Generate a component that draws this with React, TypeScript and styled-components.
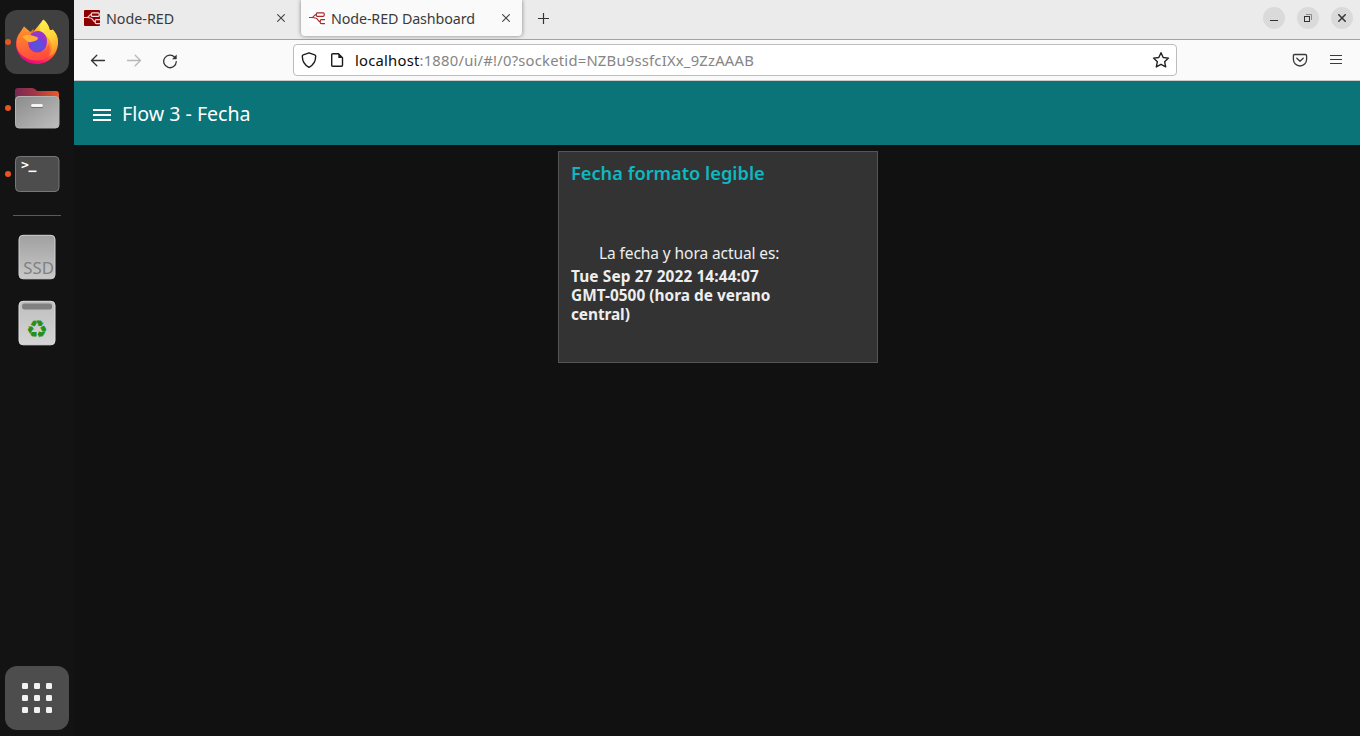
import React from "react";
import styled, { createGlobalStyle } from "styled-components";

const GlobalStyle = createGlobalStyle`
  *, *::before, *::after { box-sizing: border-box; }
  body { margin: 0; background: #111111; }
  svg { display: block; flex: none; }
`;

const Desktop = styled.div`
  display: flex;
  width: 100%;
  height: 100vh;
  overflow: hidden;
  font-family: "Noto Sans", sans-serif;
`;

const Dock = styled.nav`
  display: flex;
  flex-direction: column;
  align-items: center;
  gap: 2px;
  flex: none;
  width: 74px;
  padding: 10px 5px 6px;
  background: #131313;
`;

const DockItem = styled.div<{ $fill?: string; $last?: boolean }>`
  position: relative;
  display: flex;
  align-items: center;
  justify-content: center;
  flex: none;
  width: 64px;
  height: 64px;
  margin-top: ${(p) => (p.$last ? "auto" : "0")};
  border-radius: 12px;
  background: ${(p) => p.$fill ?? "transparent"};
`;

const RunningDot = styled.span`
  position: absolute;
  left: 0;
  top: 29px;
  width: 6px;
  height: 6px;
  border-radius: 50%;
  background: #e95420;
`;

const DockSeparator = styled.hr`
  flex: none;
  width: 48px;
  height: 1px;
  margin: 7px 0;
  border: 0;
  background: #5a5a5a;
`;

const Browser = styled.main`
  display: flex;
  flex-direction: column;
  flex: 1;
  min-width: 0;
`;

const TabStrip = styled.div`
  display: flex;
  flex: none;
  height: 40px;
  padding-right: 7px;
  background: #ebebeb;
  border-bottom: 1px solid #a3a3a3;
`;

const Tab = styled.div<{ $active?: boolean }>`
  display: flex;
  align-items: center;
  flex: none;
  width: ${(p) => (p.$active ? "221px" : "227px")};
  height: 36px;
  padding: ${(p) => (p.$active ? "0 12px 0 8px" : "0 16px 0 10px")};
  border-radius: 0 0 4px 4px;
  background: ${(p) => (p.$active ? "#fafafa" : "transparent")};
  box-shadow: ${(p) => (p.$active ? "0 0 4px rgba(0, 0, 0, 0.45)" : "none")};
  color: #3a3a3a;
`;

const TabTitle = styled.span<{ $spacing: number }>`
  flex: 1;
  margin-left: 6px;
  padding-top: 2px;
  font-size: 14.3px;
  line-height: 20px;
  letter-spacing: ${(p) => p.$spacing}px;
  white-space: nowrap;
`;

const NewTab = styled.div`
  display: flex;
  align-items: center;
  height: 37px;
  margin-left: 16px;
`;

const WindowControls = styled.div`
  display: flex;
  align-items: center;
  gap: 12px;
  height: 36px;
  margin-left: auto;
`;

const WindowButton = styled.div`
  display: flex;
  align-items: center;
  justify-content: center;
  width: 22px;
  height: 22px;
  border-radius: 50%;
  background: #dadada;
`;

const Toolbar = styled.div`
  display: flex;
  align-items: center;
  flex: none;
  height: 41px;
  padding: 0 16px;
  background: #fafafa;
  border-bottom: 1px solid #cccccc;
`;

const NavButtons = styled.div`
  display: flex;
  gap: 20px;
  width: 203px;
  padding-top: 1px;
`;

const AddressBar = styled.div`
  display: flex;
  align-items: center;
  width: 884px;
  height: 32px;
  padding: 0 6px 0 7px;
  background: #ffffff;
  border: 1px solid #bdbdbd;
  border-radius: 4px;
`;

const Url = styled.span`
  flex: 1;
  margin-left: 10px;
  font-size: 14.8px;
  line-height: 20px;
  letter-spacing: 0.22px;
  color: #858585;
  white-space: nowrap;
`;

const Host = styled.span`
  color: #0c0c0d;
`;

const PageIcon = styled.span`
  margin-left: 12px;
`;

const ToolbarActions = styled.div`
  display: flex;
  gap: 20px;
  margin-left: auto;
`;

const PageHeader = styled.header`
  display: flex;
  align-items: center;
  flex: none;
  height: 64px;
  padding: 0 19px;
  background: #0a7479;
`;

const PageTitle = styled.h1`
  margin: 0 0 0 11px;
  padding-top: 2px;
  font-size: 19.6px;
  font-weight: 400;
  line-height: 28px;
  letter-spacing: 0;
  color: #ffffff;
`;

const PageBody = styled.section`
  display: flex;
  flex: 1;
  align-items: flex-start;
  justify-content: center;
  padding: 6px 0 0 2px;
  background: #111111;
`;

const Card = styled.article`
  width: 320px;
  height: 212px;
  padding: 7px 12px;
  background: #333333;
  border: 1px solid #555555;
  color: #eeeeee;
`;

const CardTitle = styled.h2`
  margin: 0 0 57px;
  font-size: 18.2px;
  font-weight: 600;
  line-height: 28px;
  letter-spacing: 0.02px;
  color: #0eb8c0;
`;

const Label = styled.p`
  margin: 0 0 4px 28px;
  font-size: 15.5px;
  line-height: 19px;
  letter-spacing: -0.09px;
  white-space: nowrap;
`;

const Value = styled.p`
  margin: 0;
  font-size: 15.4px;
  font-weight: 700;
  line-height: 19px;
`;

const ValueLine = styled.span<{ $spacing: number }>`
  display: block;
  letter-spacing: ${(p) => p.$spacing}px;
  white-space: nowrap;
`;

const FirefoxIcon = () => (
  <svg width="48" height="48" viewBox="0 0 48 48">
    <defs>
      <linearGradient id="ffBody" x1="0.8" y1="0.05" x2="0.3" y2="1">
        <stop offset="0" stopColor="#fff44f" />
        <stop offset="0.3" stopColor="#ffb52e" />
        <stop offset="0.6" stopColor="#ff5a36" />
        <stop offset="0.85" stopColor="#f5156c" />
        <stop offset="1" stopColor="#e00a84" />
      </linearGradient>
      <linearGradient id="ffFlame" x1="0.4" y1="0" x2="0.7" y2="1">
        <stop offset="0" stopColor="#fff04a" />
        <stop offset="0.5" stopColor="#ffd33a" />
        <stop offset="1" stopColor="#ff8a25" />
      </linearGradient>
      <radialGradient id="ffGlobe" cx="0.5" cy="0.65" r="0.65">
        <stop offset="0" stopColor="#4a5be0" />
        <stop offset="0.55" stopColor="#7242dc" />
        <stop offset="1" stopColor="#a22bc4" />
      </radialGradient>
      <linearGradient id="ffHead" x1="0" y1="0" x2="0.6" y2="1">
        <stop offset="0" stopColor="#ff9a24" />
        <stop offset="1" stopColor="#ff5038" />
      </linearGradient>
    </defs>
    <path d="M30 2c4 4 5.500 7 6.500 10l3.500 0c4 4 5.200 8 5 13c-.3 12-9.500 21-21 21S3 37 3 26c0-5 1.500-8.500 4-11.500l4-6l8 7z" fill="url(#ffBody)" />
    <path d="M30.500 1.500c3 2.500 5.500 6 6.300 10.500c1 .8 1.700 2 2 3l.5-4c3.500 4 5.300 8 5.300 13.500c0 7-4 12-9 14c4-5 4-12 1-17c-2-3-6-4.500-9-7.500c-2-3-.5-8.500 2.900-12.500z" fill="url(#ffFlame)" />
    <path d="M7.200 15L11.500 8.500l1.500 5.500c1.500-.5 3-.4 4.500-.2l3-3v5.700l2.500 1.700c2 .8 3 1.300 2.300 2.800c-1.300 2-4.500 2.500-6.300 3.500c-3 1.500-3 1-3 3.500c.3 4 3.500 6.700 8 6.700c6.500 0 10.500-4 11.300-9c3 6 .5 13-5.300 16C18 45 5 38 3.500 28c-.5-5 1.200-9.500 3.700-13z" fill="url(#ffHead)" opacity="0.85" />
    <circle cx="24.500" cy="25" r="9.300" fill="url(#ffGlobe)" />
    <path d="M17 17.500c2-4 8-5.500 12-3.500c4 2.500 6 7 4.500 11c-2-3-5-5-8-5c-3-.6-6-2-8.500-2.500z" fill="#9537cb" />
    <path d="M9 19c4-3 9-2 13.500-.5c2 .7 3 1.300 2.200 2.700c-2 2-5 2.200-8 3c-3-.3-4-3-7.700-5.200z" fill="#ffae32" />
  </svg>
);

const FilesIcon = () => (
  <svg width="48" height="48" viewBox="0 0 48 48">
    <defs>
      <linearGradient id="folderBack" x1="0" y1="0" x2="1" y2="0">
        <stop offset="0" stopColor="#772953" />
        <stop offset="0.45" stopColor="#a33545" />
        <stop offset="1" stopColor="#ee5a24" />
      </linearGradient>
      <linearGradient id="folderFront" x1="0" y1="0" x2="1" y2="1">
        <stop offset="0" stopColor="#8b8b8b" />
        <stop offset="1" stopColor="#bebebe" />
      </linearGradient>
    </defs>
    <path d="M2 20V7q0-3 3-3h14q2 0 3.500 1.500L24 7h19q3 0 3 3v10z" fill="url(#folderBack)" />
    <rect x="2.500" y="12.500" width="43.500" height="31.500" rx="3.500" fill="url(#folderFront)" stroke="#b4b4b4" />
    <rect x="18" y="21" width="12" height="3" rx="1.500" fill="#707070" />
    <rect x="18" y="20" width="12" height="3" rx="1.500" fill="#f4f4f4" />
  </svg>
);

const Prompt = styled.text`
  font-family: "DejaVu Sans Mono", monospace;
  font-size: 13px;
  font-weight: 700;
  fill: #ffffff;
`;

const TerminalIcon = () => (
  <svg width="48" height="48" viewBox="0 0 48 48">
    <rect x="2.500" y="6.500" width="43.500" height="35" rx="4" fill="#4d4d4d" stroke="#777777" />
    <Prompt x="8" y="19">&gt;</Prompt>
    <path d="M15.500 21.300h8" stroke="#ffffff" strokeWidth="1.600" />
  </svg>
);

const DriveText = styled.text`
  font-family: "Noto Sans", sans-serif;
  font-size: 16.800px;
  fill: #818181;
`;

const DriveIcon = () => (
  <svg width="48" height="48" viewBox="0 0 48 48">
    <defs>
      <linearGradient id="drive" x1="0" y1="0" x2="0" y2="1">
        <stop offset="0" stopColor="#a0a0a0" />
        <stop offset="1" stopColor="#c9c9c9" />
      </linearGradient>
    </defs>
    <rect x="6" y="2.300" width="36" height="43.500" rx="4" fill="url(#drive)" stroke="#d2d2d2" />
    <DriveText x="10.300" y="41">SSD</DriveText>
  </svg>
);

const RecycleMark = styled.text`
  font-family: "DejaVu Sans", sans-serif;
  font-size: 25px;
  fill: #26901b;
  text-anchor: middle;
`;

const TrashIcon = () => (
  <svg width="48" height="48" viewBox="0 0 48 48">
    <defs>
      <linearGradient id="bin" x1="0" y1="0" x2="0" y2="1">
        <stop offset="0" stopColor="#bebebe" />
        <stop offset="1" stopColor="#d5d5d5" />
      </linearGradient>
    </defs>
    <rect x="6" y="2.300" width="36" height="43.500" rx="4" fill="url(#bin)" stroke="#dedede" />
    <rect x="9" y="4.500" width="30" height="6" rx="2.500" fill="#808080" />
    <RecycleMark x="24" y="39">{"\u267B"}</RecycleMark>
  </svg>
);

const AppsIcon = () => (
  <svg width="30" height="30" viewBox="0 0 30 30" fill="#f2f2f2">
    {[0, 12, 24].map((y) =>
      [0, 12, 24].map((x) => <rect key={`${x}-${y}`} x={x} y={y} width="6" height="6" rx="1.300" />)
    )}
  </svg>
);

const NodeRedIcon = ({ solid }: { solid?: boolean }) => (
  <svg width="16" height="16" viewBox="0 0 16 16">
    <rect width="16" height="16" rx="1" fill={solid ? "#8f0000" : "#ffffff"} />
    <g fill="none" stroke={solid ? "#f3dede" : "#a62a2a"} strokeWidth="1.200">
      <path d="M0 7.500h2.500C5.500 7.500 4.500 4.600 7.300 4.600" />
      <path d="M2.500 7.500C6 7.500 8 8 9 10q.8 1.700 2.200 1.700" />
      <rect x="7.300" y="2.800" width="7.900" height="3.500" rx="1" />
      <path d="M16 9.700h-3.600q-1.200 0-1.200 1.200v1.500q0 1.200 1.200 1.200H16" />
    </g>
  </svg>
);

const CloseGlyph = () => (
  <svg width="8" height="8" viewBox="0 0 8 8" stroke="#444444" strokeWidth="1.100">
    <path d="M.3.3l7.400 7.400M7.700.3L.3 7.700" />
  </svg>
);

const PlusIcon = () => (
  <svg width="11" height="11" viewBox="0 0 11 11" stroke="#333333" strokeWidth="1.200">
    <path d="M5.500 0v11M0 5.500h11" />
  </svg>
);

const MinimizeIcon = () => (
  <svg width="8" height="8" viewBox="0 0 8 8">
    <path d="M0 6.500h8" stroke="#333333" />
  </svg>
);

const RestoreIcon = () => (
  <svg width="8" height="8" viewBox="0 0 8 8" fill="none">
    <path d="M2 .5h5.500V6" stroke="#8b8b8b" />
    <rect x=".5" y="2.500" width="5" height="5" stroke="#333333" />
  </svg>
);

const WindowCloseIcon = () => (
  <svg width="8" height="8" viewBox="0 0 8 8" stroke="#333333" strokeWidth="1.500">
    <path d="M.3.300l7.400 7.400M7.700.300L.300 7.700" />
  </svg>
);

const ArrowIcon = ({ forward }: { forward?: boolean }) => (
  <svg width="16" height="16" viewBox="0 0 16 16" fill="none" stroke={forward ? "#b8b8b8" : "#333333"} strokeWidth="1.300" strokeLinecap="round" strokeLinejoin="round">
    <path d={forward ? "M1.500 7.500h13M9.200 2.200L14.500 7.500l-5.300 5.300" : "M14.500 7.500h-13M6.800 2.200L1.500 7.500l5.300 5.300"} />
  </svg>
);

const ReloadIcon = () => (
  <svg width="16" height="16" viewBox="0 0 16 16" fill="none" stroke="#333333" strokeWidth="1.300" strokeLinecap="round">
    <path d="M12.700 4.200A6.300 6.300 0 1 0 14.300 8.600" />
    <path d="M14.700 1.500v4.300q0 .4-.4.400H10z" fill="#333333" stroke="none" />
  </svg>
);

const ShieldIcon = () => (
  <svg width="16" height="16" viewBox="0 0 16 16" fill="none" stroke="#1c1c1c" strokeWidth="1.400" strokeLinejoin="round">
    <path d="M8 .8l5.700 2q1 .4 1 1.300c0 5-2 9-6.700 11.200C3.300 13.100 1.300 9.100 1.300 4.100q0-.9 1-1.300z" />
  </svg>
);

const DocumentIcon = () => (
  <svg width="16" height="16" viewBox="0 0 16 16" fill="none" stroke="#1c1c1c" strokeWidth="1.400" strokeLinejoin="round">
    <path d="M3.700 1.700h5.800L13.500 5.700v7.600q0 1-1 1H3.700q-1 0-1-1V2.700q0-1 1-1z" />
    <path d="M9.300 1.700v4.300h4.200z" fill="#1c1c1c" stroke="none" />
  </svg>
);

const StarIcon = () => (
  <svg width="18" height="18" viewBox="0 0 18 18" fill="none" stroke="#222222" strokeWidth="1.400" strokeLinejoin="round">
    <path d="M9 1.700l2.200 4.800l5.300.6l-3.900 3.600l1.100 5.200L9 13.300l-4.700 2.600l1.100-5.200L1.500 7.100l5.300-.6z" />
  </svg>
);

const PocketIcon = () => (
  <svg width="16" height="16" viewBox="0 0 16 16" fill="none" stroke="#3a3a3a" strokeWidth="1.300" strokeLinecap="round" strokeLinejoin="round">
    <path d="M2.700 2.500h10.600q1.300 0 1.300 1.300v3.600a6.600 6.600 0 0 1-13.200 0V3.800q0-1.300 1.300-1.300z" />
    <path d="M4.800 6.300L8 9.300l3.200-3" />
  </svg>
);

const MenuIcon = () => (
  <svg width="16" height="16" viewBox="0 0 16 16" stroke="#3a3a3a" strokeWidth="1.200">
    <path d="M2 3.500h12M2 7.500h12M2 11.500h12" />
  </svg>
);

const HamburgerIcon = () => (
  <svg width="18" height="12" viewBox="0 0 18 12" fill="#ffffff">
    <path d="M0 0h18v2H0zM0 5h18v2H0zM0 10h18v2H0z" />
  </svg>
);

const HamburgerSlot = styled.div`
  padding-top: 4px;
`;

export default function App() {
  return (
    <>
      <GlobalStyle />
      <Desktop>
        <Dock>
          <DockItem $fill="#404040"><RunningDot /><FirefoxIcon /></DockItem>
          <DockItem><RunningDot /><FilesIcon /></DockItem>
          <DockItem><RunningDot /><TerminalIcon /></DockItem>
          <DockSeparator />
          <DockItem><DriveIcon /></DockItem>
          <DockItem><TrashIcon /></DockItem>
          <DockItem $fill="#4d4d4d" $last><AppsIcon /></DockItem>
        </Dock>
        <Browser>
          <TabStrip>
            <Tab>
              <NodeRedIcon solid />
              <TabTitle $spacing={0}>Node-RED</TabTitle>
              <CloseGlyph />
            </Tab>
            <Tab $active>
              <NodeRedIcon />
              <TabTitle $spacing={-0.12}>Node-RED Dashboard</TabTitle>
              <CloseGlyph />
            </Tab>
            <NewTab><PlusIcon /></NewTab>
            <WindowControls>
              <WindowButton><MinimizeIcon /></WindowButton>
              <WindowButton><RestoreIcon /></WindowButton>
              <WindowButton><WindowCloseIcon /></WindowButton>
            </WindowControls>
          </TabStrip>
          <Toolbar>
            <NavButtons>
              <ArrowIcon />
              <ArrowIcon forward />
              <ReloadIcon />
            </NavButtons>
            <AddressBar>
              <ShieldIcon />
              <PageIcon><DocumentIcon /></PageIcon>
              <Url><Host>localhost</Host>:1880/ui/#!/0?socketid=NZBu9ssfcIXx_9ZzAAAB</Url>
              <StarIcon />
            </AddressBar>
            <ToolbarActions>
              <PocketIcon />
              <MenuIcon />
            </ToolbarActions>
          </Toolbar>
          <PageHeader>
            <HamburgerSlot><HamburgerIcon /></HamburgerSlot>
            <PageTitle>Flow 3 - Fecha</PageTitle>
          </PageHeader>
          <PageBody>
            <Card>
              <CardTitle>Fecha formato legible</CardTitle>
              <Label>La fecha y hora actual es:</Label>
              <Value>
                <ValueLine $spacing={0.12}>Tue Sep 27 2022 14:44:07</ValueLine>
                <ValueLine $spacing={0.02}>GMT-0500 (hora de verano</ValueLine>
                <ValueLine $spacing={-0.08}>central)</ValueLine>
              </Value>
            </Card>
          </PageBody>
        </Browser>
      </Desktop>
    </>
  );
}
